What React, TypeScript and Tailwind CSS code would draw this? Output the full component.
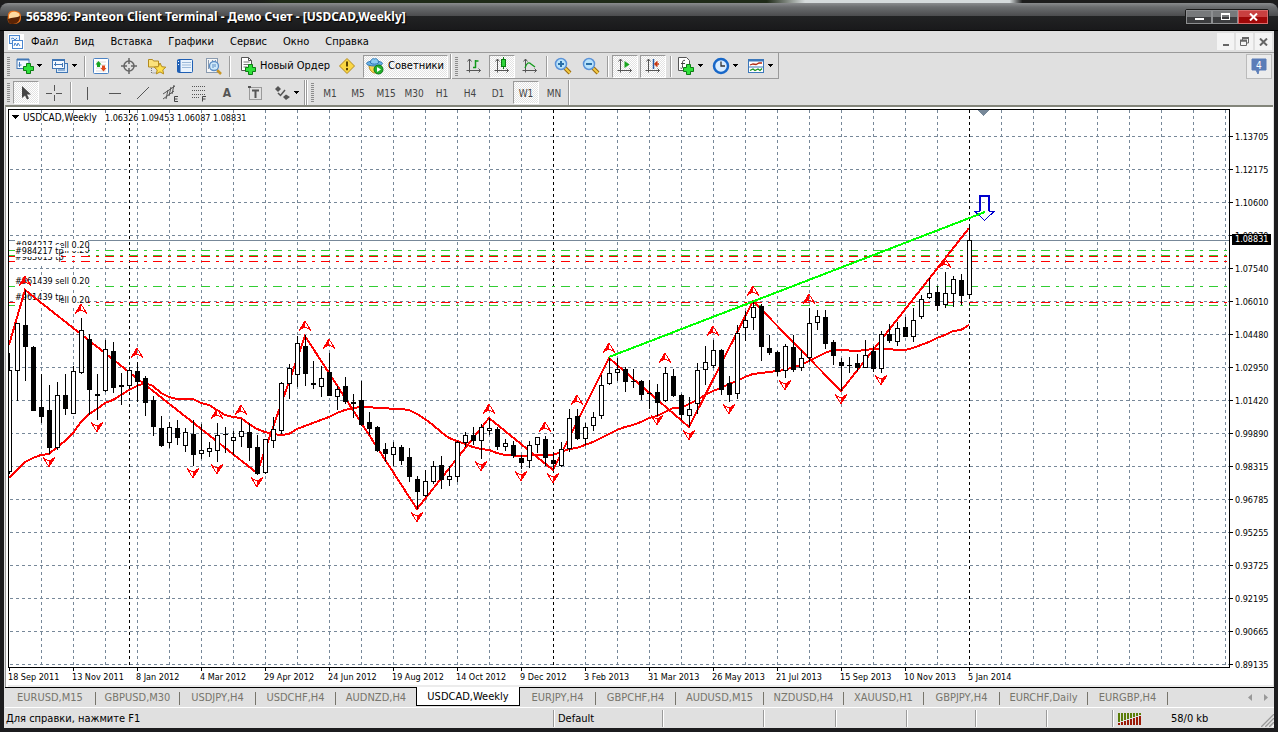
import { ReactNode } from "react";

type Candle = [number, number, number, number, 0 | 1];

// high, body top, body bottom, low, filled
const CANDLES: Candle[] = [
	[353, 370, 471, 473, 0], [323, 323, 370, 400, 0], [290, 325, 346, 380, 1], [346, 347, 410, 410, 1],
	[374, 407, 416, 422, 1], [385, 410, 447, 453, 1], [382, 395, 447, 449, 0], [374, 395, 408, 414, 1],
	[366, 371, 413, 413, 0], [318, 330, 372, 373, 0], [334, 339, 389, 414, 1], [374, 394, 395, 419, 1],
	[340, 349, 390, 391, 0], [342, 351, 387, 392, 1], [373, 385, 386, 404, 1], [367, 370, 385, 385, 0],
	[362, 371, 381, 401, 1], [376, 378, 402, 415, 1], [396, 400, 426, 435, 1], [416, 428, 445, 446, 1],
	[422, 427, 442, 447, 0], [420, 428, 437, 444, 1], [428, 432, 445, 451, 0], [420, 434, 454, 465, 1],
	[424, 450, 453, 458, 0], [442, 448, 451, 456, 0], [423, 435, 450, 461, 0], [427, 434, 434, 452, 1],
	[431, 437, 440, 454, 0], [419, 431, 436, 446, 0], [423, 432, 447, 460, 1], [435, 447, 473, 474, 1],
	[439, 439, 472, 473, 0], [417, 429, 440, 447, 0], [382, 383, 430, 433, 0], [364, 368, 383, 398, 0],
	[336, 343, 374, 386, 0], [335, 346, 373, 385, 1], [361, 383, 384, 388, 1], [366, 378, 386, 396, 0],
	[353, 372, 395, 395, 1], [386, 389, 396, 409, 0], [377, 386, 401, 403, 1], [394, 402, 403, 417, 1],
	[381, 400, 424, 425, 1], [412, 422, 428, 434, 1], [426, 427, 450, 451, 1], [443, 449, 453, 461, 1],
	[442, 447, 454, 465, 0], [445, 447, 460, 464, 1], [448, 457, 476, 481, 1], [476, 479, 491, 508, 1],
	[470, 481, 495, 496, 0], [461, 466, 481, 483, 0], [456, 465, 479, 488, 1], [466, 476, 479, 485, 0],
	[441, 442, 476, 481, 0], [432, 435, 442, 446, 0], [427, 435, 440, 444, 1], [424, 427, 440, 458, 0],
	[418, 428, 430, 434, 0], [427, 429, 446, 449, 1], [439, 443, 446, 450, 0], [441, 445, 455, 457, 1],
	[455, 458, 462, 468, 1], [441, 445, 460, 467, 0], [437, 437, 444, 452, 0], [436, 439, 457, 465, 1],
	[453, 460, 463, 469, 1], [442, 449, 465, 466, 0], [409, 418, 448, 451, 0], [409, 416, 438, 439, 1],
	[423, 427, 438, 444, 0], [412, 417, 425, 430, 0], [375, 385, 415, 418, 0], [357, 373, 383, 384, 0],
	[358, 369, 372, 380, 0], [367, 369, 381, 391, 1], [369, 381, 381, 387, 1], [380, 381, 394, 399, 1],
	[380, 393, 393, 408, 1], [384, 392, 402, 415, 1], [367, 373, 400, 401, 0], [369, 376, 395, 396, 1],
	[394, 395, 414, 419, 1], [397, 409, 415, 426, 0], [363, 370, 403, 413, 0], [346, 362, 369, 384, 0],
	[340, 350, 365, 367, 0], [349, 350, 389, 394, 1], [376, 383, 394, 401, 1], [325, 333, 393, 398, 0],
	[311, 320, 327, 340, 0], [300, 307, 317, 329, 0], [304, 306, 346, 360, 1], [335, 348, 352, 354, 1],
	[351, 352, 371, 375, 1], [344, 346, 370, 377, 0], [335, 347, 369, 371, 1], [350, 358, 367, 370, 0],
	[308, 323, 357, 361, 0], [310, 316, 322, 329, 0], [310, 317, 343, 348, 1], [340, 342, 355, 364, 1],
	[358, 362, 365, 390, 1], [357, 365, 365, 372, 1], [354, 363, 367, 370, 1], [340, 355, 367, 367, 0],
	[346, 351, 368, 371, 1], [331, 334, 368, 372, 0], [324, 334, 340, 342, 1], [322, 328, 341, 345, 0],
	[317, 327, 336, 336, 1], [308, 320, 336, 341, 0], [295, 299, 316, 318, 0], [278, 293, 297, 298, 0],
	[286, 292, 305, 310, 1], [272, 293, 304, 307, 0], [276, 279, 293, 306, 0], [274, 280, 295, 304, 1],
	[227, 240, 294, 298, 0],
];

const AVERAGE =
	"9,478 17,470 25,462 33,458 41,455 49,454 57,447 65,441 73,433 81,422 89,414 97,409 105,403 113,400 121,395 129,390 137,386 145,383 153,386 161,393 169,397 177,399 193,399 201,403 209,405 217,410 225,415 233,417 241,418 249,424 257,429 265,432 273,434 281,435 289,434 297,429 305,426 313,423 321,420 329,417 337,413 345,410 353,408 361,407 369,407 377,408 401,409 409,410 417,414 425,419 433,425 441,432 449,438 457,441 465,444 473,447 481,449 489,450 497,453 505,455 521,456 537,455 553,455 561,452 569,449 577,448 585,445 593,442 601,438 609,434 617,430 625,427 633,425 641,422 649,418 657,416 665,412 673,408 681,408 689,404 697,400 705,395 713,391 721,388 729,384 737,381 745,377 753,374 761,373 769,372 777,371 785,370 793,367 801,365 809,361 817,357 825,353 833,350 841,350 857,351 873,349 889,349 897,350 905,350 913,348 921,345 929,342 937,338 945,335 953,331 961,330 969,325";
const ZIGZAG =
	"9,345 25,290 257,473 305,336 417,509 489,418 553,470 609,358 689,427 753,301 841,391 969,228";

const UP_FRACTALS = [
	[25, 276], [81, 304], [137, 348], [217, 409], [241, 405], [305, 321], [329, 339], [489, 404],
	[545, 422], [577, 395], [609, 343], [665, 353], [713, 326], [753, 286], [809, 294], [945, 258],
];
const DOWN_FRACTALS = [
	[49, 458], [97, 423], [193, 469], [217, 465], [257, 478], [417, 513], [481, 462], [521, 472],
	[553, 474], [657, 416], [689, 431], [729, 405], [785, 381], [841, 395], [881, 376],
];

const ORDER_LINES: [number, string][] = [
	[250, "#32cd32"], [255, "#32cd32"], [256, "#ff0000"], [261, "#ff0000"],
	[286, "#32cd32"], [302, "#ff0000"], [305, "#32cd32"],
];

// later labels blank out the ones below them
const ORDER_LABELS: [number, string, number][] = [
	[253, "#983613 sell 0.20", 73],
	[248, "#984217 sell 0.20", 73],
	[260, "#983613 tp", 46],
	[254, "#984217 tp", 46],
	[284, "#961439 sell 0.20", 73],
	[303, "#983613 sell 0.20", 73],
	[300, "#961439 tp", 46],
];

const PRICES = [
	"1.13705", "1.12175", "1.10600", "1.09070", "1.07540", "1.06010", "1.04480", "1.02950", "1.01420",
	"0.99890", "0.98315", "0.96785", "0.95255", "0.93725", "0.92195", "0.90665", "0.89135",
];

const DATES = [
	"18 Sep 2011", "13 Nov 2011", "8 Jan 2012", "4 Mar 2012", "29 Apr 2012", "24 Jun 2012",
	"19 Aug 2012", "14 Oct 2012", "9 Dec 2012", "3 Feb 2013", "31 Mar 2013", "26 May 2013",
	"21 Jul 2013", "15 Sep 2013", "10 Nov 2013", "5 Jan 2014",
];

const TABS = [
	{ name: "EURUSD,M15", width: "w-[91px]" },
	{ name: "GBPUSD,M30", width: "w-[84px]" },
	{ name: "USDJPY,H4", width: "w-[76px]" },
	{ name: "USDCHF,H4", width: "w-[80px]" },
	{ name: "AUDNZD,H4", width: "w-[80px]" },
	{ name: "USDCAD,Weekly", width: "w-[104px]" },
	{ name: "EURJPY,H4", width: "w-[76px]" },
	{ name: "GBPCHF,H4", width: "w-[80px]" },
	{ name: "AUDUSD,M15", width: "w-[88px]" },
	{ name: "NZDUSD,H4", width: "w-[80px]" },
	{ name: "XAUUSD,H1", width: "w-[80px]" },
	{ name: "GBPJPY,H4", width: "w-[76px]" },
	{ name: "EURCHF,Daily", width: "w-[88px]" },
	{ name: "EURGBP,H4", width: "w-[80px]" },
];

const MENU = ["Файл", "Вид", "Вставка", "Графики", "Сервис", "Окно", "Справка"];
const PERIODS = ["M1", "M5", "M15", "M30", "H1", "H4", "D1", "W1", "MN"];

const range = (n: number) => Array.from({ length: n }, (_, i) => i);

function Icon({ children, size = 18 }: { children: ReactNode; size?: number }) {
	return (
		<svg width={size} height={size} viewBox={`0 0 ${size} ${size}`} className="shrink-0" aria-hidden="true">
			{children}
		</svg>
	);
}

function Caret() {
	return (
		<svg width="6" height="4" viewBox="0 0 6 4" className="shrink-0" shapeRendering="crispEdges" aria-hidden="true">
			<path d="M0 0h5v1h-1v1h-1v1h-1v-1h-1v-1h-1z" fill="#000" />
		</svg>
	);
}

function Grip() {
	return (
		<div className="w-[3px] h-[19px] ml-[3px] mr-[2px] shrink-0 bg-[repeating-linear-gradient(180deg,#8c8c8c_0_1px,#e0e0e0_1px_2px)]" />
	);
}

function Divider() {
	return <div className="w-[2px] h-[21px] ml-[2px] mr-px shrink-0 bg-[#9d9d9d] border-r border-white" />;
}

function BarEnd() {
	return <div className="w-[2px] h-[25px] shrink-0 bg-[#9a9a9a] border-r border-white" />;
}

interface ToolProps {
	label: string;
	pressed?: boolean;
	caret?: boolean;
	children: ReactNode;
}

function Tool({ label, pressed, caret, children }: ToolProps) {
	return (
		<button
			type="button"
			aria-label={label}
			className={
				"h-[23px] shrink-0 flex items-center justify-center " +
				(caret ? "w-[35px] gap-[3px] " : pressed ? "w-[26px] mx-px " : "w-7 ") +
				(pressed
					? "border border-t-[#9a9a9a] border-l-[#9a9a9a] border-r-white border-b-white bg-[repeating-conic-gradient(#ffffff_0_25%,#e2e2e2_0_50%)] bg-[length:2px_2px]"
					: "")
			}
		>
			{children}
			{caret ? <Caret /> : null}
		</button>
	);
}

const Plus = ({ x, y }: { x: number; y: number }) => (
	<path
		transform={`translate(${x} ${y})`}
		d="M3.500.500h4v3h3v4h-3v3h-4v-3h-3v-4h3z"
		fill="#2fe03a"
		stroke="#0b7d12"
	/>
);

const Axes = () => (
	<path
		d="M4.500 2v13.500M1.500 13.500h14M2.500 4.500l2-2.500 2 2.500M13.500 11.500l2 2-2 2"
		fill="none"
		stroke="#555"
	/>
);

const Lens = ({ plus }: { plus?: boolean }) => (
	<Icon>
		<path d="M11 11l5 5" stroke="#9a6a10" strokeWidth="4" />
		<path d="M11 11l5 5" stroke="#f4cc45" strokeWidth="2" />
		<circle cx="7" cy="7" r="5.500" fill="#b9e3fb" stroke="#5b93d8" strokeWidth="1.500" />
		<path d={plus ? "M4 7h6M7 4v6" : "M4 7h6"} stroke="#2a6fa8" strokeWidth="2" />
	</Icon>
);

function MainToolbar() {
	return (
		<div className="h-[26px] pt-px flex items-center w-max border-r border-b border-[#9a9a9a]">
			<Grip />
			<Tool label="Новый график" caret>
				<Icon>
					<rect x="1" y="2.500" width="12" height="9" fill="#f4f9ff" stroke="#4177b5" />
					<path d="M1 2.500h12" stroke="#4177b5" strokeWidth="2" />
					<path d="M3.500 5v5M2.500 8h3" stroke="#4177b5" />
					<Plus x={7} y={6} />
				</Icon>
			</Tool>
			<Tool label="Профили" caret>
				<Icon>
					<rect x="5.500" y="6.500" width="11" height="9" fill="#dcebfa" stroke="#4177b5" />
					<rect x="1.500" y="2.500" width="12" height="9" fill="#f4f9ff" stroke="#4177b5" />
					<path d="M1 3h13" stroke="#4177b5" strokeWidth="2" />
					<path d="M4.500 5v4M3 7.500h8M11.500 6v4M7 13h7" stroke="#4177b5" />
				</Icon>
			</Tool>
			<Divider />
			<Tool label="Обзор рынка">
				<Icon>
					<rect x="1.500" y="1.500" width="15" height="15" rx="1" fill="#fff" stroke="#4c83c4" />
					<path d="M4 5h10M4 8h10M4 11h10M4 14h10" stroke="#ddd" />
					<path d="M6.500 4l3 3.500H8V10H5V7.500H3.500z" fill="#18a51f" />
					<path d="M11.500 14.500l3-3.500H13V8.500h-3V11H8.500z" fill="#e04a1b" />
				</Icon>
			</Tool>
			<Tool label="Окно данных">
				<Icon>
					<circle cx="9" cy="9" r="5" fill="none" stroke="#666" strokeWidth="1.500" />
					<path d="M9 1v6M9 11v6M1 9h6M11 9h6" stroke="#666" strokeWidth="1.500" />
				</Icon>
			</Tool>
			<Tool label="Навигатор">
				<Icon>
					<path d="M.5 2.500h4l1 1.500h5v6H.5z" fill="#fbe27c" stroke="#b38b1e" />
					<path d="M3.500 11v5h4" stroke="#777" strokeDasharray="1 1" fill="none" />
					<path d="M12 6l1.800 3.700 4 .5-3 2.700.8 4-3.600-2-3.600 2 .8-4-3-2.700 4-.5z" fill="#ffe04d" stroke="#b38b1e" />
				</Icon>
			</Tool>
			<Tool label="Терминал">
				<Icon>
					<rect x="1.500" y="2.500" width="15" height="13" rx="1" fill="#e9f3fd" stroke="#1f5fb4" />
					<path d="M3 3v12" stroke="#1f5fb4" strokeWidth="3" />
					<path d="M6 5.500h9M6 8h9M6 10.500h9" stroke="#9bb9d9" />
					<path d="M2 4.500h1M2 7.500h1" stroke="#fff" />
				</Icon>
			</Tool>
			<Tool label="Тестер стратегий">
				<Icon>
					<rect x="2.500" y="1.500" width="11" height="14" fill="#f6f6f6" stroke="#8a9bb0" />
					<path d="M4.500 3v9M8.500 3v3M11.500 3v2" stroke="#8a9bb0" />
					<path d="M13 13l4 4" stroke="#c79524" strokeWidth="2.500" />
					<circle cx="10" cy="9" r="4.500" fill="#cfe9fa" stroke="#5b8cc4" strokeWidth="1.300" />
					<path d="M9 7v4M11 7v3" stroke="#5b8cc4" />
				</Icon>
			</Tool>
			<Divider />
			<button type="button" className="h-[23px] w-[101px] shrink-0 flex items-center gap-[3px] pl-[7px] whitespace-nowrap">
				<Icon>
					<path d="M2.500.500h7l3 3v10h-10z" fill="#fff" stroke="#555" />
					<path d="M9.500.500v3h3" fill="none" stroke="#555" />
					<path d="M4.500 5h6M4.500 7.500h6M4.500 10h4" stroke="#777" />
					<Plus x={6} y={7} />
				</Icon>
				<span className="pt-px">Новый Ордер</span>
			</button>
			<Tool label="Предупреждения">
				<Icon>
					<path d="M9 1.500l7.500 7.500-7.500 7.500-7.500-7.500z" fill="#fbd743" stroke="#b38b1e" strokeLinejoin="round" />
					<path d="M9 4.500v5M9 11v2.200" stroke="#5b4300" strokeWidth="2" />
				</Icon>
			</Tool>
			<button
				type="button"
				aria-pressed="true"
				className="h-[23px] w-[85px] mx-[2px] shrink-0 flex items-center gap-1 pl-[2px] whitespace-nowrap border border-t-[#9a9a9a] border-l-[#9a9a9a] border-r-white border-b-white bg-[repeating-conic-gradient(#ffffff_0_25%,#e2e2e2_0_50%)] bg-[length:2px_2px]"
			>
				<Icon>
					<path d="M3 8c0 5 3 8 6 8s6-3 6-8z" fill="#f8d34b" stroke="#b38b1e" />
					<ellipse cx="8.500" cy="6.500" rx="8" ry="2.500" fill="#6bb2e4" stroke="#2f78b5" />
					<path d="M4.500 6c0-3.500 2-5 4-4 2-1 4 .5 4 4-2 1.500-6 1.500-8 0z" fill="#8dcbf2" stroke="#2f78b5" />
					<circle cx="12.500" cy="12.500" r="4.500" fill="#22b12c" stroke="#0d7715" />
					<path d="M11 10l4 2.500-4 2.500z" fill="#fff" />
				</Icon>
				<span className="pt-px">Советники</span>
			</button>
			<BarEnd />
			<Grip />
			<Tool label="Бары">
				<Icon>
					<Axes />
					<path d="M10.500 3v8M10.500 4h3M8 10.500h3" stroke="#129a1b" strokeWidth="1.500" />
				</Icon>
			</Tool>
			<Tool label="Свечи" pressed>
				<Icon>
					<Axes />
					<path d="M10.500 0v12" stroke="#0b7d12" />
					<rect x="8.500" y="2.500" width="4" height="7" fill="#2fd43a" stroke="#0b7d12" />
				</Icon>
			</Tool>
			<Tool label="Линия">
				<Icon>
					<Axes />
					<path d="M4 11c2-6 4-6 6-4l4 3" fill="none" stroke="#129a1b" strokeWidth="1.300" />
				</Icon>
			</Tool>
			<Divider />
			<Tool label="Увеличить">
				<Lens plus />
			</Tool>
			<Tool label="Уменьшить">
				<Lens />
			</Tool>
			<Divider />
			<div className="flex px-px">
				<Tool label="Автопрокрутка" pressed>
					<Icon>
						<Axes />
						<path d="M8.500 4l5 3.500-5 3.500z" fill="#18a51f" />
					</Icon>
				</Tool>
				<Tool label="Сдвиг графика" pressed>
					<Icon>
						<Axes />
						<path d="M9.500 2v10" stroke="#2a5fa8" strokeWidth="1.500" />
						<path d="M15 7h-4M13.500 4.500L11 7l2.500 2.500" stroke="#c7330c" strokeWidth="1.500" fill="none" />
					</Icon>
				</Tool>
			</div>
			<Divider />
			<Tool label="Индикаторы" caret>
				<Icon>
					<path d="M1.500.500h8l3 3v10h-11z" fill="#fff" stroke="#555" />
					<path d="M8 3.500c-3-1-2.500 2-2.500 7-.3 1-1 1-2 .5M4 6.500h4" fill="none" stroke="#444" />
					<Plus x={6} y={7} />
				</Icon>
			</Tool>
			<Tool label="Периоды" caret>
				<Icon>
					<circle cx="9" cy="9" r="7" fill="#d8ecff" stroke="#1767c8" strokeWidth="2.500" />
					<path d="M9 4.500V9h4" fill="none" stroke="#333" strokeWidth="1.300" />
				</Icon>
			</Tool>
			<Tool label="Шаблоны" caret>
				<Icon>
					<rect x="1.500" y="2.500" width="15" height="13" fill="#fff" stroke="#3c78bb" />
					<path d="M1.500 3.500h15" stroke="#3c78bb" strokeWidth="2" />
					<path d="M3 8l3-1 3 .5 3-1.500h3" fill="none" stroke="#b22a12" strokeWidth="1.300" />
					<path d="M2 10h14" stroke="#3c78bb" />
					<path d="M3 13.500l3-1.500 2 1.500 3-1.500 2 1.500 2-2" fill="none" stroke="#14911c" strokeWidth="1.200" />
				</Icon>
			</Tool>
		</div>
	);
}

function DrawingToolbar() {
	return (
		<div className="h-[26px] pt-px flex items-center">
			<Grip />
			<Tool label="Курсор" pressed>
				<Icon>
					<path d="M5 2v12l3-2.500 2 4 2-1-2-4h4z" fill="#444" />
				</Icon>
			</Tool>
			<Tool label="Перекрестие">
				<Icon>
					<path d="M1 9.500h6M11 9.500h6M9.500 1v6M9.500 11v6" stroke="#555" />
				</Icon>
			</Tool>
			<Divider />
			<Tool label="Вертикальная линия">
				<Icon>
					<path d="M9.500 3v13" stroke="#555" />
				</Icon>
			</Tool>
			<Tool label="Горизонтальная линия">
				<Icon>
					<path d="M3 9.500h12" stroke="#555" />
				</Icon>
			</Tool>
			<Tool label="Трендовая линия">
				<Icon>
					<path d="M3 15L15 3" stroke="#555" />
				</Icon>
			</Tool>
			<Tool label="Канал">
				<Icon>
					<path d="M1 10l12-8M1 15l11-8M4 15l2-9M7 12l2-9M10 10l2-9" stroke="#555" fill="none" />
					<path d="M16 12.500h-3.500v5H16M12.500 15h3" stroke="#444" fill="none" />
				</Icon>
			</Tool>
			<Tool label="Линии Фибоначчи">
				<Icon>
					<path d="M2 2.500h14M2 6.500h14M2 10.500h14M2 13.500h8" stroke="#555" strokeDasharray="1 1" />
					<path d="M12.500 17.500v-5H16M12.500 15h3" stroke="#444" fill="none" />
				</Icon>
			</Tool>
			<Tool label="Текст">
				<span className="text-[12px] font-bold text-[#555]">A</span>
			</Tool>
			<Tool label="Текстовая метка">
				<Icon>
					<rect x="3.500" y="3.500" width="12" height="12" fill="none" stroke="#555" strokeDasharray="1 1" />
					<path d="M6 6.500h7M9.500 6.500V14" stroke="#555" strokeWidth="2" />
					<path d="M2 2h3v2H2z" fill="#555" />
				</Icon>
			</Tool>
			<Tool label="Стрелки" caret>
				<Icon>
					<path d="M5 2l3 3-3 3-3-3z" fill="#555" />
					<path d="M5 9l2.500 2.500L12 6" stroke="#555" strokeWidth="1.500" fill="none" />
					<path d="M13 10.500l4 2.500-4 3-3-3z" fill="#555" />
				</Icon>
			</Tool>
			<BarEnd />
			<BarEnd />
			<Grip />
			{PERIODS.map((period) => (
				<Tool key={period} label={period} pressed={period === "W1"}>
					<span className="pt-px text-[10px] text-[#444]">{period}</span>
				</Tool>
			))}
			<BarEnd />
		</div>
	);
}

function Plot() {
	return (
		<svg
			className="absolute inset-0 w-full h-full"
			shapeRendering="crispEdges"
			fontFamily="'DejaVu Sans Condensed', 'Noto Sans', sans-serif"
			fontSize="9"
		>
			<g transform="translate(-9 -110)">
				{range(17).map((i) => (
					<path key={i} d={`M10 ${136.5 + i * 33}H1229`} stroke="#778899" strokeDasharray="3 3" />
				))}
				{range(38).map((i) => (
					<path key={i} d={`M${41.5 + i * 32} 110V667`} stroke="#778899" strokeDasharray="3 3" />
				))}
				{[129.5, 553.5, 969.5].map((x) => (
					<path key={x} d={`M${x} 110V667`} stroke="#000" strokeDasharray="3 3" />
				))}
				<path d="M9 240.500H1229" stroke="#778899" />
				{ORDER_LINES.map(([y, color]) => (
					<path key={y} d={`M9 ${y + 0.5}H1227`} stroke={color} strokeDasharray="9 6 3 6" />
				))}

				{ORDER_LABELS.map(([y, text, width]) => (
					<g key={y}>
						<rect x="15" y={y - 9} width={width} height="12" fill="#fff" />
						<text x="15" y={y}>{text}</text>
					</g>
				))}

				<polyline points={AVERAGE} fill="none" stroke="#f00" strokeWidth="2" />
				<polyline points={ZIGZAG} fill="none" stroke="#f00" strokeWidth="2" />

				{CANDLES.map(([high, top, bottom, low, filled], i) => {
					const x = 9 + i * 8;
					return (
						<g key={i}>
							<rect x={x} y={high} width="1" height={low - high + 1} />
							<rect x={x - 2} y={top} width="5" height={bottom - top + 1} />
							{filled ? null : (
								<rect x={x - 1} y={top + 1} width="3" height={bottom - top - 1} fill="#fff" />
							)}
						</g>
					);
				})}

				{UP_FRACTALS.map(([x, y]) => (
					<g key={x} transform={`translate(${x} ${y})`} stroke="#f00" fill="none">
						<path d="M0 0L-5 9L0 6z" fill="#f00" stroke="none" />
						<path d="M0 0L5.500 9L0 6L-5.500 9z" />
					</g>
				))}
				{DOWN_FRACTALS.map(([x, y]) => (
					<g key={x} transform={`translate(${x} ${y})`} stroke="#f00" fill="none">
						<path d="M0 9L5 0L0 3z" fill="#f00" stroke="none" />
						<path d="M0 9L5.500 0L0 3L-5.500 0z" />
					</g>
				))}

				<path d="M980 211V196h9v15" fill="none" stroke="#0000cd" strokeWidth="2" />
				<path d="M974 211.500h6M989 211.500h6M975 211.500l9.500 9 9.500-9" fill="none" stroke="#0000cd" />
				<path d="M609 357L985 212" stroke="#0f0" strokeWidth="2" />
				<path d="M977 110h13l-6.500 6z" fill="#778899" />

				<rect x="12" y="113" width="235" height="10" fill="#fff" />
				<path d="M12 115h7v1h-1v1h-1v1h-1v1h-1v-1h-1v-1h-1v-1h-1z" />
				<text x="23" y="121" fontSize="10">USDCAD,Weekly</text>
				{["1.06326", "1.09453", "1.06087", "1.08831"].map((price, i) => (
					<text key={price} x={105 + i * 36} y="121">{price}</text>
				))}
			</g>
		</svg>
	);
}

function Chart() {
	return (
		<main className="flex-1 min-h-0 flex ml-px mr-px pt-[2px] pl-[2px] bg-white border-t-2 border-t-[#83857a] border-l border-l-[#9a9a9a] text-[9px] leading-[12px] text-black">
			<div className="flex-1 min-w-0 flex flex-col">
				<div className="relative flex-1 min-h-0 border border-black overflow-hidden">
					<Plot />
				</div>
				<div className="h-[19px] flex border-b-2 border-[#ececec] whitespace-nowrap">
					{DATES.map((date) => (
						<div key={date} className="w-16 shrink-0 pl-px">
							<div className="w-px h-[3px] bg-black" />
							<div className="-ml-px">{date}</div>
						</div>
					))}
				</div>
			</div>
			<div className="relative w-[43px] shrink-0 pt-[11px] overflow-hidden border-b-2 border-[#ececec]">
				{PRICES.map((price) => (
					<div key={price} className="h-[33px] flex items-center">
						<div className="w-[3px] h-px bg-black" />
						<span className="pl-[2px]">{price}</span>
					</div>
				))}
				<div className="absolute left-[2px] top-[125px] w-[39px] h-[11px] pl-[3px] leading-[11px] bg-black text-white">
					1.08831
				</div>
			</div>
		</main>
	);
}

function TitleBar() {
	return (
		<header className="h-7 shrink-0 flex items-center px-[6px] pr-[9px] rounded-t-lg border-b border-black bg-[linear-gradient(180deg,#8a8c8e_0,#6b6d6f_4px,#4b4c4e_13px,#222324_13px,#19191b_100%)]">
			<Icon size={16}>
				<path d="M2 6c0-4 4-5 8-4 5 1 5 4 5 7 0 4-3 6-8 6S1 12 2 6z" fill="#e8731c" />
				<path d="M3 6c1-3 4-4 7-3 4 1 4 3 3 5-3 2-7 1-10 2z" fill="#ffd9a0" />
				<path d="M2 10c4-2 9-1 12-3 0 5-3 8-7 8s-5-2-5-5z" fill="#5b2405" />
			</Icon>
			<h1 className="flex-1 pl-1 font-['Noto_Sans',sans-serif] text-[12px] font-bold text-white [text-shadow:1px_1px_1px_#000]">
				565896: Panteon Client Terminal - Демо Счет - [USDCAD,Weekly]
			</h1>
			<div className="flex border border-[#1a1a1a] rounded-xs">
				<button type="button" aria-label="Свернуть" className="w-[26px] h-[14px] border border-[#8d8f91] bg-[linear-gradient(180deg,#77797b_50%,#3c3d3f_50%)]">
					<div className="w-[9px] h-[2px] mt-[5px] mx-auto bg-white" />
				</button>
				<button type="button" aria-label="Развернуть" className="w-[26px] h-[14px] border border-[#8d8f91] bg-[linear-gradient(180deg,#77797b_50%,#3c3d3f_50%)]">
					<div className="w-[9px] h-[7px] mx-auto border border-t-2 border-white" />
				</button>
				<button type="button" aria-label="Закрыть" className="w-[30px] h-[14px] border border-[#d96a6a] bg-[linear-gradient(180deg,#c94040_50%,#a00808_50%)]">
					<svg width="9" height="8" viewBox="0 0 9 8" className="mx-auto" aria-hidden="true">
						<path d="M1 .5l7 7M8 .5l-7 7" stroke="#fff" strokeWidth="2" />
					</svg>
				</button>
			</div>
		</header>
	);
}

function MenuBar() {
	return (
		<nav className="h-[22px] shrink-0 flex items-center pl-1 border-b border-white bg-[#e0e0e0]">
			<Icon size={16}>
				<rect width="16" height="16" fill="#fff" />
				<rect x="1.500" y="1.500" width="10" height="8" fill="#e8f2fd" stroke="#4a86cf" />
				<rect x="4.500" y="6.500" width="10" height="8" fill="#fff" stroke="#4a86cf" />
				<path d="M3 5l2-1 2 2 2-2M6 12l1-3 2 3 1-3 2 3" fill="none" stroke="#4a86cf" />
			</Icon>
			<div className="flex-1 flex gap-4 pl-[7px] pt-px">
				{MENU.map((item) => (
					<button key={item} type="button">{item}</button>
				))}
			</div>
			<div className="flex gap-[2px] pr-[2px]">
				<button type="button" aria-label="Свернуть окно" className="w-[17px] h-[17px] bg-[#f4f4f4]">
					<div className="w-[6px] h-[2px] mt-[7px] mx-auto bg-[#666]" />
				</button>
				<button type="button" aria-label="Восстановить окно" className="w-[17px] h-[17px] flex items-center justify-center bg-[#f4f4f4]">
					<svg width="9" height="9" viewBox="0 0 9 9" aria-hidden="true">
						<path d="M.5 4h6v4.500h-6zM2.500 3V1h6v5H7" fill="none" stroke="#666" />
						<path d="M0 3.500h7M2 1h7" stroke="#666" strokeWidth="2" />
					</svg>
				</button>
				<button type="button" aria-label="Закрыть окно" className="w-[17px] h-[17px] flex items-center justify-center bg-[#f4f4f4]">
					<svg width="9" height="8" viewBox="0 0 9 8" aria-hidden="true">
						<path d="M1 .5l7 7M8 .5l-7 7" stroke="#666" strokeWidth="2" />
					</svg>
				</button>
			</div>
		</nav>
	);
}

function ChartTabs() {
	return (
		<div className="h-[21px] shrink-0 flex items-start ml-px border-b border-white text-[#77756c]">
			{TABS.map(({ name, width }, i) => (
				<button
					key={name}
					type="button"
					className={
						width +
						" shrink-0 h-[19px] text-center " +
						(name === "USDCAD,Weekly"
							? "bg-white text-black border-x border-b border-black"
							: "border-t border-black")
					}
				>
					<span
						className={
							"block h-[13px] leading-[11px] mt-[2px] " +
							(i === 4 || i === 5 ? "" : "border-r border-[#77756c]")
						}
					>
						{name}
					</span>
				</button>
			))}
			<div className="flex-1 h-[19px] flex items-center justify-end gap-3 pr-[6px] border-t border-black">
				<button type="button" aria-label="Влево">
					<svg width="4" height="7" viewBox="0 0 4 7" aria-hidden="true">
						<path d="M4 0v7L0 3.500z" fill="#999" />
					</svg>
				</button>
				<button type="button" aria-label="Вправо">
					<svg width="4" height="7" viewBox="0 0 4 7" aria-hidden="true">
						<path d="M0 0v7l4-3.500z" fill="#999" />
					</svg>
				</button>
			</div>
		</div>
	);
}

function StatusBar() {
	const cell = "h-[17px] pt-px shrink-0 border-l border-[#9a9a9a] shadow-[inset_1px_0_#fff] ";
	return (
		<footer className="h-5 shrink-0 flex items-center leading-4">
			<div className="flex-1 pl-[2px] pt-px">Для справки, нажмите F1</div>
			<div className={cell + "w-[109px] pl-[4px]"}>Default</div>
			<div className={cell + "w-[101px]"} />
			<div className={cell + "w-[72px]"} />
			<div className={cell + "w-[71px]"} />
			<div className={cell + "w-[69px]"} />
			<div className={cell + "w-[71px]"} />
			<div className={cell + "w-[66px]"} />
			<div className={cell + "w-[162px] pl-[5px] flex items-center"}>
				<svg width="24" height="12" viewBox="0 0 24 12" shapeRendering="crispEdges" aria-hidden="true">
					{range(8).map((i) => (
						<g key={i}>
							<rect x={i * 3} y="0" width="2" height={9 - i} fill="#5a7d08" />
							<rect x={i * 3} y={10 - i} width="2" height={2 + i} fill="#9c1a08" />
						</g>
					))}
				</svg>
				<span className="flex-1 pl-[29px]">58/0 kb</span>
				<svg width="15" height="15" viewBox="0 0 15 15" className="self-end" aria-hidden="true">
					<path d="M1 15L15 1M5 15L15 5M9 15L15 9M13 15l2-2" stroke="#fff" />
					<path d="M2 15L15 2M6 15l9-9M10 15l5-5" stroke="#9a9a9a" strokeWidth="1.500" />
				</svg>
			</div>
		</footer>
	);
}

export default function App() {
	return (
		<div className="h-screen flex flex-col overflow-hidden bg-[#1c1c1e] font-['DejaVu_Sans_Condensed','Noto_Sans',sans-serif] text-[11px] text-black">
			<div className="h-[3px] shrink-0 bg-[linear-gradient(90deg,#1d1d1d_0_20%,#1f2a18_22%_60%,#d5dadb_63%_79%,#1d1d1d_80%)]" />
			<TitleBar />
			<div className="flex-1 min-h-0 flex flex-col mb-1 mx-1 bg-[#e0e0e0]">
				<MenuBar />
				<div className="flex justify-between border-t border-[#9a9a9a] -mt-px">
					<div>
						<MainToolbar />
						<DrawingToolbar />
					</div>
					<button type="button" aria-label="Сообщения" className="w-[26px] h-[25px] mr-[2px] mt-px flex items-center justify-center bg-[#ececec] border border-[#bbb]">
						<svg width="16" height="17" viewBox="0 0 16 17" aria-hidden="true">
							<path d="M1 1h14v11H8l-1 4-2-4H1z" fill="#5b7db8" stroke="#5b7db8" strokeLinejoin="round" />
							<text x="5" y="11" fontSize="10" fill="#fff">4</text>
						</svg>
					</button>
				</div>
				<Chart />
				<ChartTabs />
				<StatusBar />
			</div>
		</div>
	);
}
